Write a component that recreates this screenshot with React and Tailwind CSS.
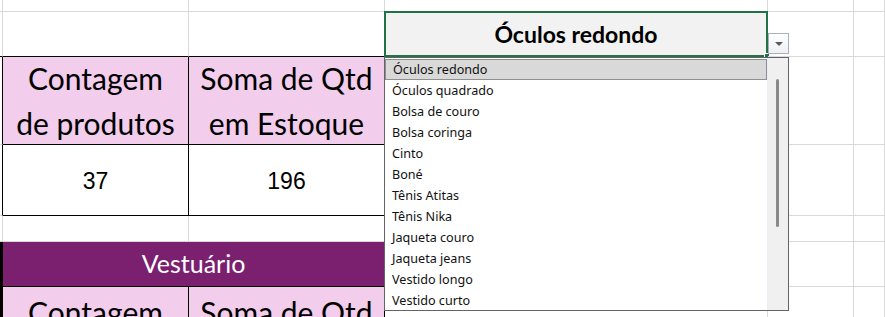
import React from "react";

const items = [
  "Óculos redondo",
  "Óculos quadrado",
  "Bolsa de couro",
  "Bolsa coringa",
  "Cinto",
  "Boné",
  "Tênis Atitas",
  "Tênis Nika",
  "Jaqueta couro",
  "Jaqueta jeans",
  "Vestido longo",
  "Vestido curto",
];

const g = "border-r border-b border-[#d9d9d9]";
const calibri = { fontFamily: "Lato, 'Noto Sans', sans-serif" };

function HeaderCell({ children }) {
  return (
    <div
      className="flex items-center justify-center border-r border-b border-black bg-[#f2cdec] text-center text-[30px] leading-[45px] text-black"
      style={calibri}
    >
      {children}
    </div>
  );
}

function Dropdown() {
  return (
    <div className="absolute left-[384px] top-[57px] flex h-[254px] w-[405px] border border-[#646464] bg-white">
      <div className="flex-1 pt-px">
        {items.map((t, i) => (
          <div
            key={t}
            className={`flex h-[21px] items-center pl-[7px] pt-[2px] text-[12.6px] text-[#111] ${
              i === 0 ? "border border-[#8f8f8f] bg-[#d9d9d9] pl-[6px] pt-px" : ""
            }`}
            style={{ fontFamily: "'Noto Sans', 'Open Sans', sans-serif" }}
          >
            {t}
          </div>
        ))}
      </div>
      <div className="relative w-[21px] border-l border-[#e6eef8] bg-[#f0f0f0]">
        <div className="absolute left-[8px] top-[21px] h-[148px] w-[3px] rounded-full bg-[#8a8a8a]" />
      </div>
    </div>
  );
}

export default function App() {
  return (
    <div className="relative h-[317px] w-[885px] overflow-hidden bg-white">
      <div className="grid h-full grid-cols-[3px_186px_196px_383px_86px_1fr] grid-rows-[12px_45px_88px_71px_26px_45px_1fr]">
        {/* row 1 */}
        <div className={g} />
        <div className={g} />
        <div className={g} />
        <div className={g} />
        <div className={g} />
        <div className={g} />

        {/* row 2 */}
        <div className="border-r border-b border-r-[#d9d9d9] border-b-black" />
        <div className="border-r border-b border-r-[#d9d9d9] border-b-black" />
        <div className="border-r border-b border-r-[#d9d9d9] border-b-black" />
        <div className="relative -ml-px -mt-px flex items-center justify-center border-2 border-[#217346] bg-[#f2f2f2]">
          <span className="text-[23px] font-bold text-black" style={calibri}>
            Óculos redondo
          </span>
          <div className="absolute -bottom-[4px] -right-[4px] h-[6px] w-[6px] border border-white bg-[#217346]" />
        </div>
        <div className={`${g} relative`}>
          <div className="absolute left-0 top-[21px] flex h-[21px] w-[21px] items-center justify-center border border-[#aab0bb] bg-gradient-to-b from-white to-[#eef0f3]">
            <div className="h-0 w-0 border-x-[4px] border-t-[4px] border-x-transparent border-t-[#5a5a5a]" />
          </div>
        </div>
        <div className={g} />

        {/* row 3 */}
        <div className="border-r border-b border-r-black border-b-[#d9d9d9]" />
        <HeaderCell>
          Contagem
          <br />
          de produtos
        </HeaderCell>
        <HeaderCell>
          Soma de Qtd
          <br />
          em Estoque
        </HeaderCell>
        <div className={g} />
        <div className={g} />
        <div className={g} />

        {/* row 4 */}
        <div className="border-r border-b border-r-black border-b-[#d9d9d9]" />
        <div
          className="flex items-center justify-center border-r border-b border-black pt-[3px] text-[23px] text-black"
          style={{ fontFamily: "'Liberation Sans', Arial, sans-serif" }}
        >
          37
        </div>
        <div
          className="flex items-center justify-center border-r border-b border-black pt-[3px] text-[23px] text-black"
          style={{ fontFamily: "'Liberation Sans', Arial, sans-serif" }}
        >
          196
        </div>
        <div className={g} />
        <div className={g} />
        <div className={g} />

        {/* row 5 */}
        <div className={g} />
        <div className={g} />
        <div className={g} />
        <div className={g} />
        <div className={g} />
        <div className={g} />

        {/* row 6 */}
        <div className="bg-black" />
        <div
          className="col-span-2 flex items-center justify-center border-r border-b border-black bg-[#7b1f6f] text-[25px] text-white"
          style={calibri}
        >
          Vestuário
        </div>
        <div className={g} />
        <div className={g} />
        <div className={g} />

        {/* row 7 */}
        <div className="bg-black" />
        <div
          className="flex justify-center border-r border-black bg-[#f2cdec] pt-[3px] text-[30px] leading-[45px] text-black"
          style={calibri}
        >
          Contagem
        </div>
        <div
          className="flex justify-center border-r border-black bg-[#f2cdec] pt-[3px] text-[30px] leading-[45px] text-black"
          style={calibri}
        >
          Soma de Qtd
        </div>
        <div className={g} />
        <div className={g} />
        <div className={g} />
      </div>
      <Dropdown />
    </div>
  );
}
